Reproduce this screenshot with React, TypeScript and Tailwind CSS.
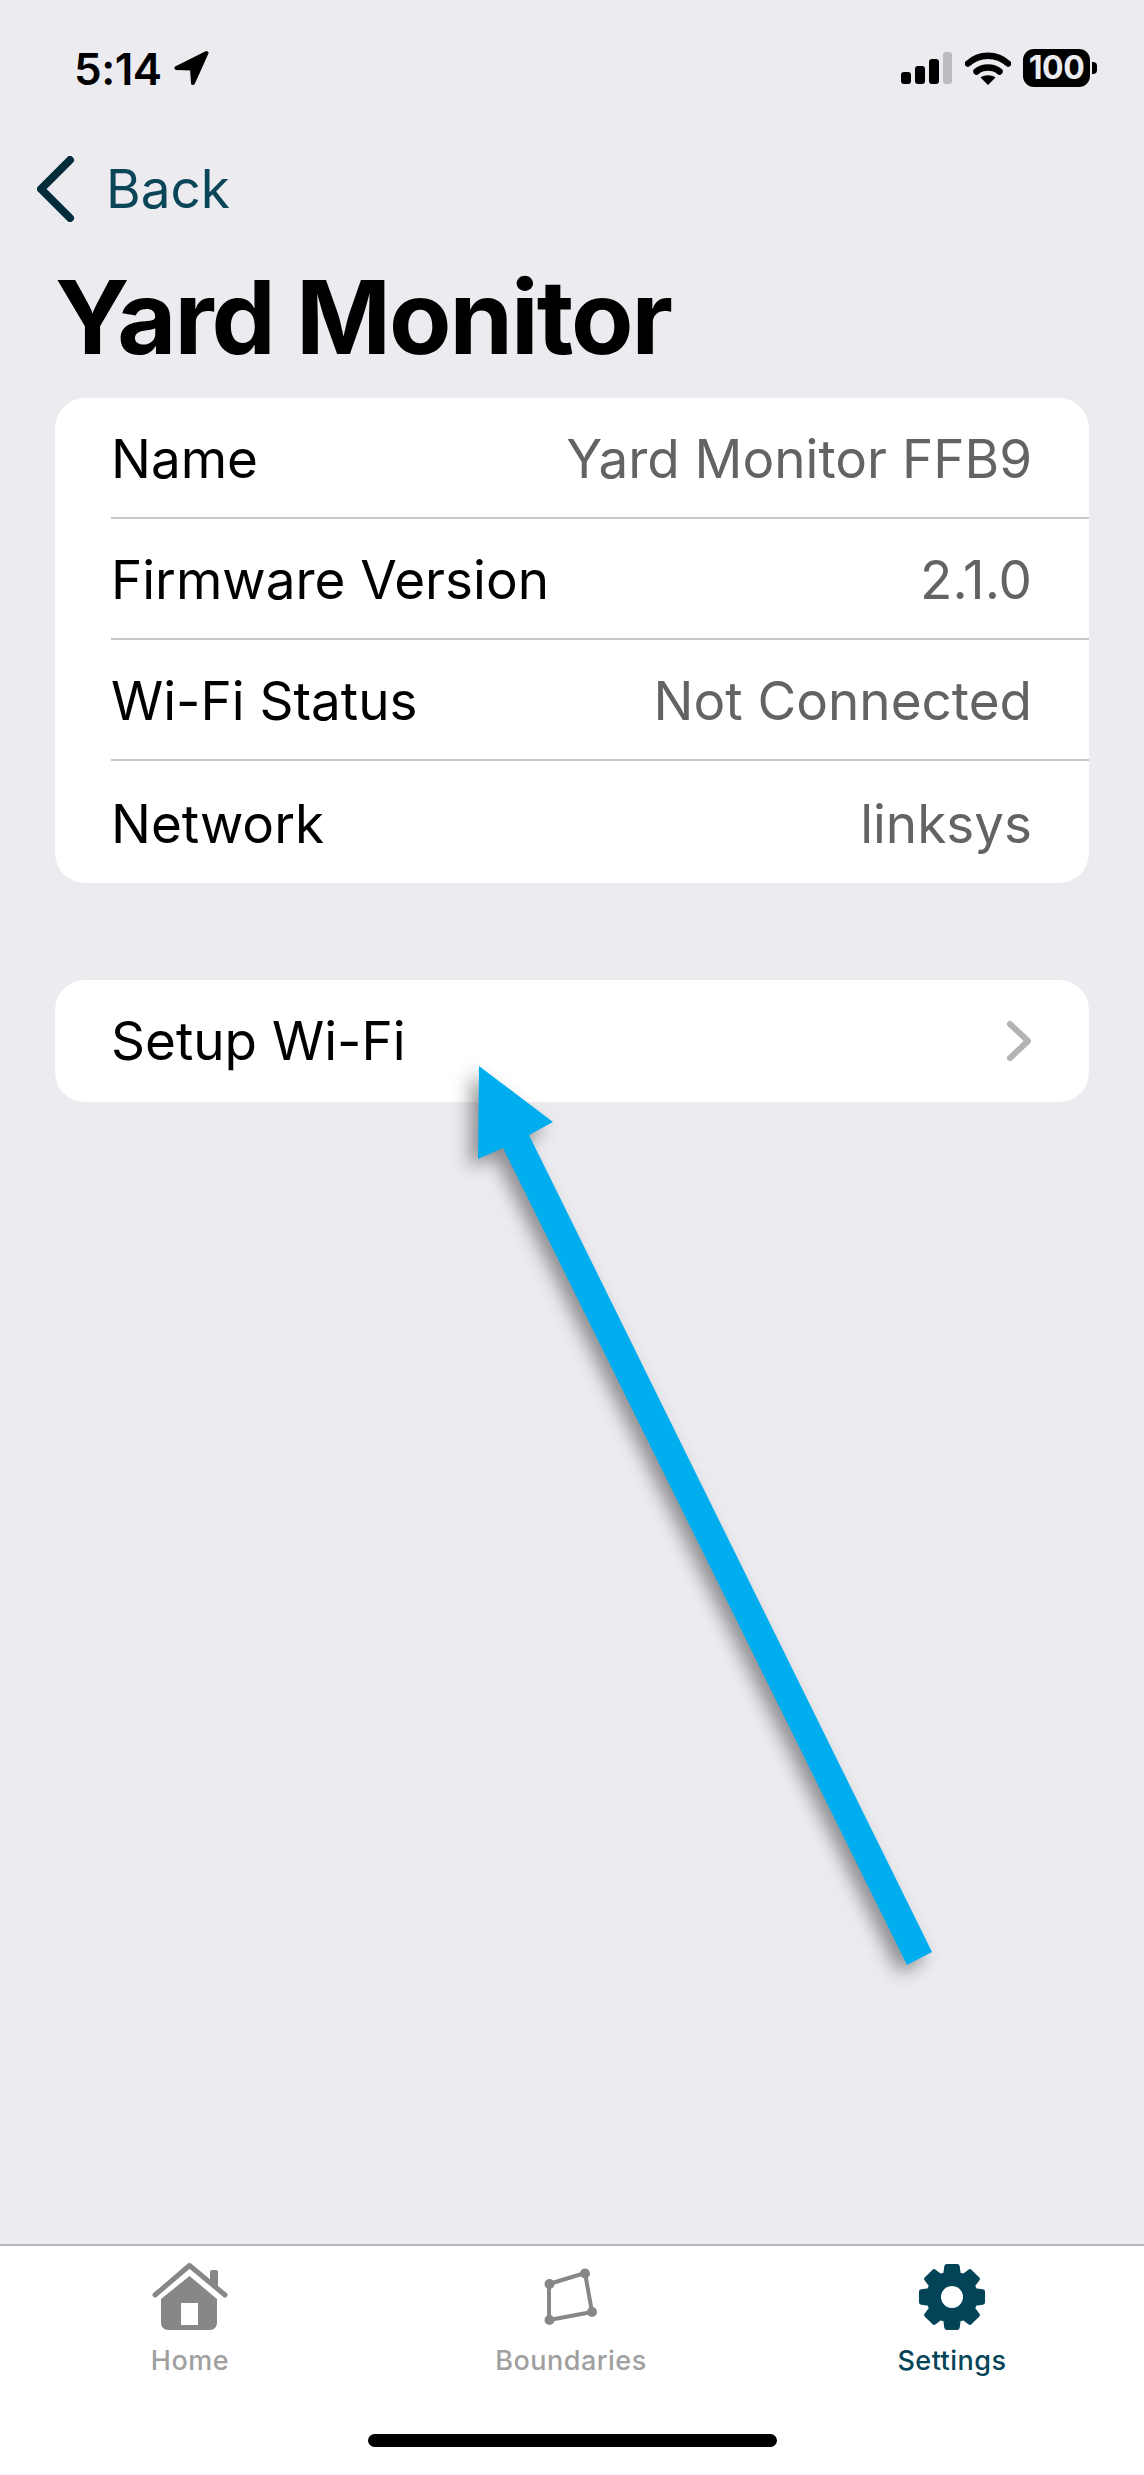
import React from "react";

// gear outline, 8 teeth
function gearPath(cx: number, cy: number) {
  const pts: string[] = [];
  const outer = 31;
  const root = 23.5;
  for (let i = 0; i < 8; i++) {
    const a = (i * Math.PI) / 4 - Math.PI / 2;
    const steps: [number, number][] = [
      [root, -0.27],
      [outer, -0.17],
      [outer, 0.17],
      [root, 0.27],
    ];
    steps.forEach(([r, d]) => {
      pts.push(`${(cx + r * Math.cos(a + d)).toFixed(2)} ${(cy + r * Math.sin(a + d)).toFixed(2)}`);
    });
  }
  return "M" + pts.join("L") + "Z";
}

function StatusBar() {
  return (
    <div className="h-[138px] flex justify-between items-start pt-[46px] pl-[74px] pr-[47px]">
      <div className="flex items-center">
        <span className="text-[44px] leading-[46px] font-semibold text-black tracking-[-0.5px]">5:14</span>
        <svg width="36" height="36" viewBox="0 0 36 36" className="ml-[12px] mt-[-2px]">
          <path d="M32.5 3 L2.5 18 L18 18.5 L19 33 Z" fill="#000" stroke="#000" strokeWidth="4" strokeLinejoin="round" />
        </svg>
      </div>
      <div className="flex items-center mt-[3px]">
        {/* signal */}
        <div className="flex items-end gap-[4px] h-[32px]">
          <div className="w-[10px] h-[12px] rounded-[3px] bg-black" />
          <div className="w-[10px] h-[18px] rounded-[3px] bg-black" />
          <div className="w-[10px] h-[25px] rounded-[3px] bg-black" />
          <div className="w-[9px] h-[32px] rounded-[3px] bg-[#bcbcc0]" />
        </div>
        {/* wifi */}
        <svg width="46" height="36" viewBox="0 0 46 36" className="ml-[13px]">
          <path d="M3 13.5 C14 3 32 3 43 13.5" fill="none" stroke="#000" strokeWidth="6.5" strokeLinecap="round" />
          <path d="M11.5 21.5 C17.5 16 28.5 16 34.5 21.5" fill="none" stroke="#000" strokeWidth="6.5" strokeLinecap="round" />
          <path d="M23 35 L15.5 27.5 C19.5 24.5 26.5 24.5 30.5 27.5 Z" fill="#000" />
        </svg>
        {/* battery */}
        <div className="ml-[12px] w-[67px] h-[38px] rounded-[11px] bg-black flex items-center justify-center">
          <span className="text-[32px] leading-none font-bold text-[#ebebf0] tracking-[-0.5px]">100</span>
        </div>
        <div className="ml-[2px] w-[5px] h-[12px] rounded-r-[4px] bg-black" />
      </div>
    </div>
  );
}

function InfoRow({ label, value, last }: { label: string; value: string; last?: boolean }) {
  return (
    <div className="pl-[56px]">
      <div
        className={
          last
            ? "h-[122px] flex items-center justify-between pr-[57px]"
            : "h-[121px] flex items-center justify-between pr-[57px] border-b-2 border-[#c8c8ca]"
        }
      >
        <span className="text-[53px] leading-[64px] mt-[3px] text-black">{label}</span>
        <span className="text-[53px] leading-[64px] mt-[3px] text-[#636366]">{value}</span>
      </div>
    </div>
  );
}

function TabItem({ label, active, children }: { label: string; active?: boolean; children: React.ReactNode }) {
  return (
    <div className="w-[230px] flex flex-col items-center">
      <div className="h-[67px] flex items-center justify-center">{children}</div>
      <span
        className={
          active
            ? "mt-[15px] text-[27px] leading-[32px] font-medium text-[#034458] tracking-[0.5px]"
            : "mt-[15px] text-[27px] leading-[32px] font-medium text-[#a0a0a0] tracking-[0.5px]"
        }
      >
        {label}
      </span>
    </div>
  );
}

export default function App() {
  return (
    <div className="relative w-[1144px] h-[2475px] bg-[#ebebf0] flex flex-col overflow-hidden font-['Inter',sans-serif]">
      <StatusBar />

      {/* back */}
      <div className="h-[102px] flex items-center pl-[37px]">
        <svg width="40" height="66" viewBox="0 0 40 66">
          <path d="M33 4 L4 33 L33 62" fill="none" stroke="#032d3a" strokeWidth="8" strokeLinecap="round" strokeLinejoin="round" />
        </svg>
        <span className="ml-[29px] text-[53px] leading-none text-[#0b4558]">Back</span>
      </div>

      {/* title */}
      <div className="h-[158px] pl-[55px] pb-[4px] flex items-center">
        <h1 className="text-[102px] leading-none font-bold text-black tracking-[-2px]">Yard Monitor</h1>
      </div>

      {/* info card */}
      <div className="mx-[55px] rounded-[30px] bg-white overflow-hidden">
        <InfoRow label="Name" value="Yard Monitor FFB9" />
        <InfoRow label="Firmware Version" value="2.1.0" />
        <InfoRow label="Wi-Fi Status" value="Not Connected" />
        <InfoRow label="Network" value="linksys" last />
      </div>

      {/* setup card */}
      <div className="mt-[97px] mx-[55px] h-[122px] rounded-[30px] bg-white flex items-center justify-between pl-[56px] pr-[57px]">
        <span className="text-[53px] leading-[64px] text-black">Setup Wi-Fi</span>
        <svg width="26" height="42" viewBox="0 0 26 42">
          <path d="M4 4 L22 21 L4 38" fill="none" stroke="#b3b3b6" strokeWidth="6" strokeLinecap="round" strokeLinejoin="round" />
        </svg>
      </div>

      <div className="flex-1" />

      {/* tab bar */}
      <div className="h-[231px] bg-white border-t-2 border-[#b8b8bb] flex flex-col">
        <div className="flex justify-between pl-[75px] pr-[77px] pt-[17px]">
          <TabItem label="Home">
            <svg width="76" height="67" viewBox="0 0 76 67">
              <path d="M3 32 L37.5 2.5 L73 32" fill="none" stroke="#878787" strokeWidth="5" strokeLinecap="round" strokeLinejoin="round" />
              <path d="M58 17 V9 a2 2 0 0 1 2 -2 h4 a2 2 0 0 1 2 2 V24 Z" fill="#878787" />
              <path fillRule="evenodd" d="M37.5 13 L65 36 V60 a7 7 0 0 1 -7 7 H16 a7 7 0 0 1 -7 -7 V36 Z M29 40 V62 H46 V40 Z" fill="#878787" />
            </svg>
          </TabItem>
          <TabItem label="Boundaries">
            <svg width="54" height="58" viewBox="0 0 54 58">
              <path d="M5 16 L41 5 L48 44 L5 52 Z" fill="none" stroke="#878787" strokeWidth="4" strokeLinejoin="round" />
              <circle cx="5.5" cy="16" r="5" fill="#878787" />
              <circle cx="41" cy="5.5" r="5" fill="#878787" />
              <circle cx="48" cy="44" r="5" fill="#878787" />
              <circle cx="5.5" cy="52" r="5" fill="#878787" />
            </svg>
          </TabItem>
          <TabItem label="Settings" active>
            <svg width="68" height="68" viewBox="0 0 68 68">
              <path d={gearPath(34, 34)} fill="#034458" stroke="#034458" strokeWidth="5" strokeLinejoin="round" />
              <circle cx="34" cy="34" r="11" fill="#fff" />
            </svg>
          </TabItem>
        </div>
        <div className="flex-1" />
        {/* home indicator */}
        <div className="flex justify-center pb-[28px]">
          <div className="w-[409px] h-[13px] rounded-full bg-black" />
        </div>
      </div>

      {/* annotation arrow over the page */}
      <svg className="absolute left-0 top-0 pointer-events-none drop-shadow-[-8px_8px_9px_rgba(0,0,0,0.4)]" width="1144" height="2475" viewBox="0 0 1144 2475">
        <polygon points="479,1066 553,1122 529,1135 932,1952 907,1965 503,1148 478,1159" fill="#00aeef" />
      </svg>
    </div>
  );
}
